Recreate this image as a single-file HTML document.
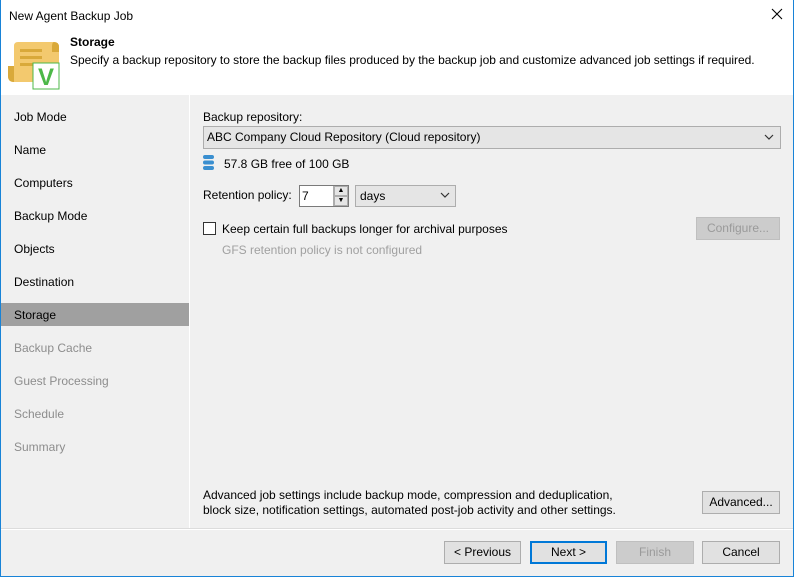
<!DOCTYPE html>
<html><head><meta charset="utf-8"><style>
*{margin:0;padding:0;box-sizing:border-box}
body{width:794px;height:577px;overflow:hidden;font-family:"Liberation Sans",sans-serif;font-size:12px;color:#000;background:#f0f0f0;position:relative}
.a{position:absolute}
.btn{position:absolute;height:23px;border:1px solid #adadad;background:#e1e1e1;text-align:center;line-height:21px;font-size:12px}
.nav{position:absolute;left:14px;font-size:12px;color:#000}
.dis{color:#8d8d8d}
</style></head><body>
<div class="a" style="left:0;top:0;width:794px;height:577px;border:1px solid #1883d7;border-top:none"></div>
<div class="a" style="left:1px;top:0;width:792px;height:95px;background:#fff"></div>
<div class="a" style="left:9px;top:9px;font-size:12px">New Agent Backup Job</div>
<svg class="a" style="left:771px;top:8px" width="12" height="12"><path d="M1 1 L11 11 M11 1 L1 11" stroke="#000" stroke-width="1.1"/></svg>
<svg class="a" style="left:6px;top:38px" width="56" height="52" viewBox="0 0 56 52">
<path d="M12 4 H48 Q53 4 53 9 V44 H8 Q2 44 2 38 V28 H8 V8 Q8 4 12 4Z" fill="#f3c96e"/>
<path d="M2 28 H8 V44 Q2 44 2 38Z" fill="#d9a93a"/>
<path d="M48 4 Q53 4 53 9 V14 H46 V9 Q46 4 48 4Z" fill="#d9a93a"/>
<rect x="14" y="11" width="22" height="3" fill="#d9a93a"/>
<rect x="14" y="18" width="22" height="3" fill="#d9a93a"/>
<rect x="14" y="25" width="18" height="3" fill="#d9a93a"/>
<rect x="27" y="25" width="26" height="26" fill="#fff" stroke="#4cb848" stroke-width="1"/>
<text x="40" y="47" text-anchor="middle" font-family="Liberation Sans" font-weight="bold" font-size="24" fill="#4cb848">V</text>
</svg>
<div class="a" style="left:70px;top:35px;font-weight:bold;font-size:12px">Storage</div>
<div class="a" style="left:70px;top:53px;font-size:12px;letter-spacing:-0.03px">Specify a backup repository to store the backup files produced by the backup job and customize advanced job settings if required.</div>
<div class="a" style="left:189px;top:95px;width:1px;height:434px;background:#fff"></div>
<div class="a" style="left:1px;top:303px;width:188px;height:23px;background:#a0a0a0"></div>
<div class="nav" style="top:110px">Job Mode</div>
<div class="nav" style="top:143px">Name</div>
<div class="nav" style="top:176px">Computers</div>
<div class="nav" style="top:209px">Backup Mode</div>
<div class="nav" style="top:242px">Objects</div>
<div class="nav" style="top:275px">Destination</div>
<div class="nav" style="top:308px">Storage</div>
<div class="nav dis" style="top:341px">Backup Cache</div>
<div class="nav dis" style="top:374px">Guest Processing</div>
<div class="nav dis" style="top:407px">Schedule</div>
<div class="nav dis" style="top:440px">Summary</div>

<div class="a" style="left:203px;top:110px">Backup repository:</div>
<div class="a" style="left:203px;top:126px;width:578px;height:23px;border:1px solid #adadad;background:#e5e5e5;line-height:21px;padding-left:3px">ABC Company Cloud Repository (Cloud repository)</div>
<svg class="a" style="left:764px;top:133px" width="10" height="8"><path d="M1 2 L5 6 L9 2" fill="none" stroke="#333" stroke-width="1.2"/></svg>
<svg class="a" style="left:203px;top:155px" width="12" height="16"><g fill="#3a8fd0"><rect x="0" y="0" width="11" height="4" rx="2"/><rect x="0" y="5.5" width="11" height="4" rx="2"/><rect x="0" y="11" width="11" height="4" rx="2"/></g></svg>
<div class="a" style="left:224px;top:157px">57.8 GB free of 100 GB</div>
<div class="a" style="left:203px;top:188px">Retention policy:</div>
<div class="a" style="left:299px;top:185px;width:50px;height:22px;border:1px solid #7a7a7a;background:#fff;line-height:20px;padding-left:2px">7</div>
<div class="a" style="left:333px;top:186px;width:15px;height:20px;border-left:1px solid #adadad;background:#f0f0f0"></div>
<div class="a" style="left:334px;top:186px;width:14px;height:10px;border:1px solid #adadad;background:#e5e5e5;font-size:7px;text-align:center;line-height:8px">▲</div>
<div class="a" style="left:334px;top:196px;width:14px;height:10px;border:1px solid #adadad;background:#e5e5e5;font-size:7px;text-align:center;line-height:8px">▼</div>
<div class="a" style="left:355px;top:185px;width:101px;height:22px;border:1px solid #adadad;background:#e5e5e5;line-height:20px;padding-left:4px">days</div>
<svg class="a" style="left:440px;top:191px" width="10" height="8"><path d="M1 2 L5 6 L9 2" fill="none" stroke="#333" stroke-width="1.2"/></svg>
<div class="a" style="left:203px;top:222px;width:13px;height:13px;border:1px solid #333;background:#fff"></div>
<div class="a" style="left:222px;top:222px">Keep certain full backups longer for archival purposes</div>
<div class="a dis" style="left:222px;top:243px;color:#a0a0a0">GFS retention policy is not configured</div>
<div class="btn dis" style="left:696px;top:217px;width:84px;border-color:#bfbfbf;background:#cccccc;color:#9a9a9a">Configure...</div>

<div class="a" style="left:203px;top:488px;line-height:15px">Advanced job settings include backup mode, compression and deduplication,<br>block size, notification settings, automated post-job activity and other settings.</div>
<div class="btn" style="left:702px;top:491px;width:78px">Advanced...</div>
<div class="a" style="left:1px;top:529px;width:792px;height:1px;background:#fff"></div>
<div class="a" style="left:1px;top:528px;width:792px;height:1px;background:#dcdcdc"></div>
<div class="btn" style="left:444px;top:541px;width:77px">&lt; Previous</div>
<div class="btn" style="left:530px;top:541px;width:77px;border:2px solid #0078d7;line-height:19px">Next &gt;</div>
<div class="btn" style="left:616px;top:541px;width:78px;border-color:#bfbfbf;background:#cccccc;color:#9a9a9a">Finish</div>
<div class="btn" style="left:702px;top:541px;width:78px">Cancel</div>
</body></html>
